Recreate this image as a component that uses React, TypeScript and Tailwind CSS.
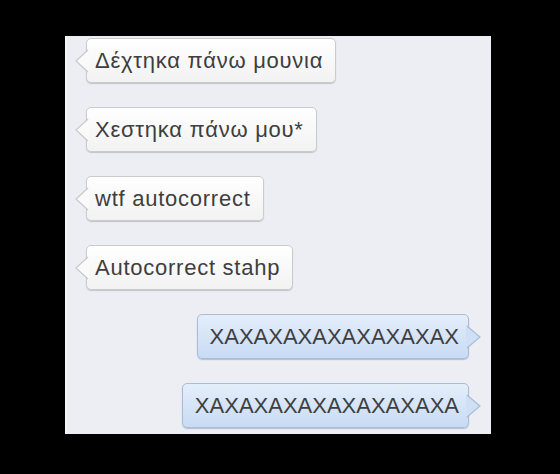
import React from "react";

type Msg = { text: string; mine?: boolean };

const MESSAGES: Msg[] = [
  { text: "Δέχτηκα πάνω μουνια" },
  { text: "Χεστηκα πάνω μου*" },
  { text: "wtf autocorrect" },
  { text: "Autocorrect stahp" },
  { text: "XAXAXAXAXAXAXAXAX", mine: true },
  { text: "XAXAXAXAXAXAXAXAXA", mine: true },
];

// little chevron tail on the side of a bubble
const Tail = ({ mine }: { mine?: boolean }) =>
  mine ? (
    <svg
      className="absolute right-[-13px] top-1/2 -translate-y-1/2"
      width="15"
      height="24"
      viewBox="0 0 15 24"
    >
      <path d="M0 1 L1 1 L14 12 L1 23 L0 23 Z" fill="#cfe0f6" />
      <path d="M1 1 L14 12 L1 23" fill="none" stroke="#a9bdd8" strokeWidth="1.2" />
    </svg>
  ) : (
    <svg
      className="absolute left-[-12px] top-1/2 -translate-y-1/2"
      width="14"
      height="24"
      viewBox="0 0 14 24"
    >
      <path d="M14 1 L13 1 L1 12 L13 23 L14 23 Z" fill="#fafafa" />
      <path d="M13 1 L1 12 L13 23" fill="none" stroke="#c9c9c9" strokeWidth="1.2" />
    </svg>
  );

const Bubble = ({ text, mine }: Msg) => (
  <div
    className={`relative h-[45px] flex items-center rounded-[5px] border text-[22px] text-[#3e3e3e] ${
      mine
        ? "self-end mr-[22px] pl-[12px] pr-[9px] border-[#a9bdd8] bg-gradient-to-b from-[#e4eefb] to-[#c8dbf4] shadow-[0_1px_1px_rgba(80,100,140,0.35)]"
        : "self-start ml-[19px] pl-[8px] pr-[12px] tracking-[0.75px] border-[#cbcbcb] bg-gradient-to-b from-white to-[#f2f2f2] shadow-[0_1px_1px_rgba(0,0,0,0.18)]"
    }`}
  >
    <Tail mine={mine} />
    <span className="relative">{text}</span>
  </div>
);

export default function App() {
  return (
    <div
      className="w-[560px] h-[474px] bg-black pt-[36px] pl-[65px]"
      style={{ fontFamily: '"Liberation Sans", Arial, sans-serif' }}
    >
      <div className="w-[426px] h-[398px] bg-[#eceef3] border-l-2 border-[#f6f7f9] flex flex-col gap-[24px] pt-[2px] overflow-hidden">
        {MESSAGES.map((m, i) => (
          <Bubble key={i} {...m} />
        ))}
      </div>
    </div>
  );
}
